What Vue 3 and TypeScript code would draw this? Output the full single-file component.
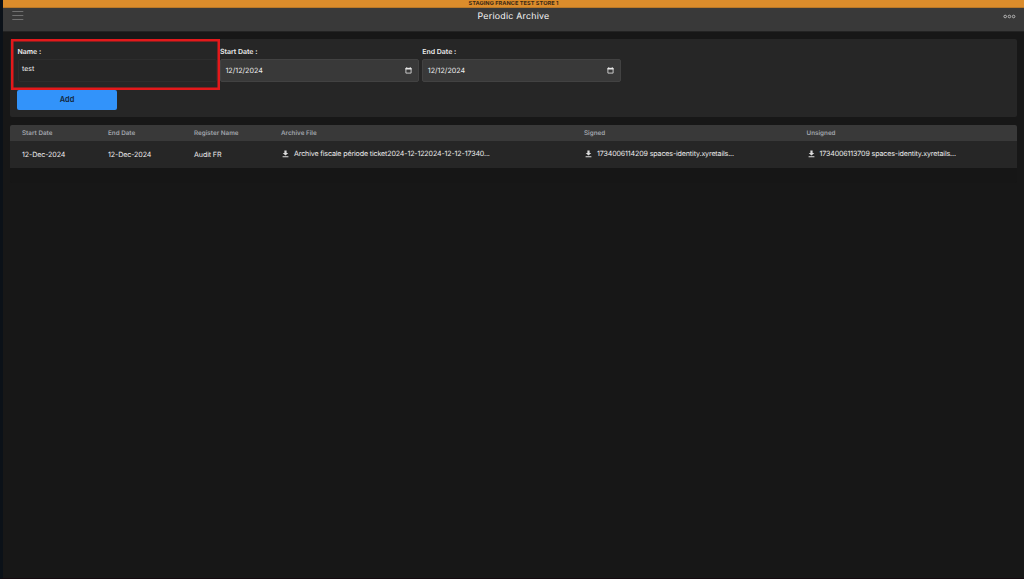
<script setup lang="ts">
interface ArchiveRow {
  start: string
  end: string
  register: string
  files: string[]
}

const columns: string[] = ['Start Date', 'End Date', 'Register Name', 'Archive File', 'Signed', 'Unsigned']

const dateFields: { label: string; value: string }[] = [
  { label: 'Start Date :', value: '12/12/2024' },
  { label: 'End Date :', value: '12/12/2024' },
]

const rows: ArchiveRow[] = [
  {
    start: '12-Dec-2024',
    end: '12-Dec-2024',
    register: 'Audit FR',
    files: [
      'Archive fiscale période ticket2024-12-122024-12-12-17340...',
      '1734006114209 spaces-identity.xyretails...',
      '1734006113709 spaces-identity.xyretails...',
    ],
  },
]
</script>

<template>
  <div class="screen">
    <div class="banner">STAGING FRANCE TEST STORE 1</div>
    <header class="topbar">
      <svg class="menu" viewBox="0 0 12 10" width="12" height="10">
        <path d="M0.3 0.5h11M0.3 4.5h11M0.3 8.5h11" stroke="#777" stroke-width="0.9" />
      </svg>
      <h1>Periodic Archive</h1>
      <svg class="more" viewBox="0 0 13 5" width="13" height="5">
        <g fill="none" stroke="#b5b5b5" stroke-width="1">
          <circle cx="2.2" cy="2.5" r="1.3" />
          <circle cx="6.4" cy="2.5" r="1.3" />
          <circle cx="10.6" cy="2.5" r="1.3" />
        </g>
      </svg>
    </header>

    <main>
      <section class="panel form">
        <div class="fields">
          <div class="field name">
            <label>Name :</label>
            <div class="input">test</div>
            <span class="highlight"></span>
          </div>
          <div v-for="f in dateFields" :key="f.label" class="field">
            <label>{{ f.label }}</label>
            <div class="input date">
              <span>{{ f.value }}</span>
              <svg viewBox="0 0 7 7" width="7" height="7">
                <path d="M0.9 1.3h5.2v4.8h-5.2z" fill="none" stroke="#e8e8e8" stroke-width="0.8" />
                <path d="M0.5 0.9h6v1.5h-6zM1.3 0.2h0.9v1h-0.9zM4.8 0.2h0.9v1h-0.9z" fill="#e8e8e8" />
              </svg>
            </div>
          </div>
        </div>
        <button type="button">Add</button>
      </section>

      <section class="table">
        <div class="grid head">
          <span v-for="c in columns" :key="c">{{ c }}</span>
        </div>
        <div v-for="r in rows" :key="r.files[0]" class="grid row">
          <span>{{ r.start }}</span>
          <span>{{ r.end }}</span>
          <span>{{ r.register }}</span>
          <span v-for="file in r.files" :key="file" class="file">
            <svg viewBox="0 0 7 8" width="7" height="8">
              <path d="M2.4 0.5h2.2v2.5h1.7L3.5 5.6 0.7 3h1.7zM0.6 6.3h5.8v0.9h-5.8z" fill="#dcdcdc" />
            </svg>
            <span>{{ file }}</span>
          </span>
        </div>
      </section>
    </main>
  </div>
</template>

<style>
html,
body {
  margin: 0;
  overflow: hidden;
  background: #171717;
}
</style>

<style scoped>
* {
  box-sizing: border-box;
}

.screen {
  width: 1024px;
  height: 579px;
  background: #171717;
  border-left: 3px solid #0b1118;
  border-bottom: 1px solid #150b10;
  font-family: Inter, "Liberation Sans", sans-serif;
  font-size: 7px;
  color: #ececec;
  white-space: nowrap;
  text-rendering: geometricPrecision;
}

.banner {
  height: 8px;
  background: #db8c2b;
  border-bottom: 1px solid #b97828;
  color: #3b2915;
  font-size: 5.6px;
  font-weight: 700;
  line-height: 8px;
  text-align: center;
  letter-spacing: 0.04px;
}

.topbar {
  height: 24px;
  padding: 0 8px 8px 9px;
  background: #393939;
  border-bottom: 1px solid #232323;
  display: grid;
  grid-template-columns: 13px 1fr 13px;
  align-items: center;
}

h1 {
  margin: 0;
  padding: 1px 1px 0 0;
  font-size: 8.8px;
  line-height: 15px;
  font-weight: 400;
  text-align: center;
  letter-spacing: 0.24px;
  color: #f6f6f6;
}

main {
  padding: 7px 7px 0;
}

.panel {
  height: 78px;
  padding: 7px 7px 7px 7.5px;
  background: #262626;
  border-radius: 2px;
}

.fields {
  display: flex;
  gap: 3.4px;
}

.field {
  position: relative;
  width: 199px;
}

label {
  display: block;
  height: 13px;
  line-height: 11px;
  font-size: 7px;
  font-weight: 600;
  letter-spacing: -0.03px;
}

.input {
  height: 23px;
  padding: 0 3.5px;
  border: 1px solid #2d2d2d;
  border-radius: 2px;
  line-height: 18px;
}

.date {
  display: flex;
  align-items: center;
  justify-content: space-between;
  padding: 0 6px 0 4.5px;
  background: #393939;
  border-color: #424242;
  line-height: 21px;
  font-size: 7.15px;
}

.highlight {
  position: absolute;
  left: -7px;
  top: -7px;
  width: 209.5px;
  height: 51px;
  border: 2px solid #e3191b;
  box-shadow: inset 0 0 0 0.5px #e3191b;
  z-index: 1;
}

button {
  display: block;
  width: 100px;
  height: 20px;
  margin: 8px 0 0 -0.5px;
  padding: 0;
  border: 0;
  border-radius: 2px;
  background: #3293fa;
  color: #14273d;
  font: 600 7.4px/20px Inter, sans-serif;
}

.table {
  height: 58px;
  margin-top: 8px;
  border-radius: 2px;
  background: #161616;
  overflow: hidden;
}

.grid {
  display: grid;
  grid-template-columns: 86px 86px 87px 303px 222.5px 1fr;
  align-items: center;
  padding-left: 12px;
}

.head {
  height: 16px;
  background: #393939;
  color: #a0a4ab;
  font-size: 6.3px;
  line-height: 8px;
  font-weight: 600;
}

.row {
  height: 27px;
  padding-bottom: 1px;
  background: #262626;
  font-size: 7.1px;
  letter-spacing: -0.1px;
}

.file {
  display: flex;
  align-items: center;
  gap: 5px;
  padding: 0 0 1px 1px;
  letter-spacing: -0.14px;
}

</style>
